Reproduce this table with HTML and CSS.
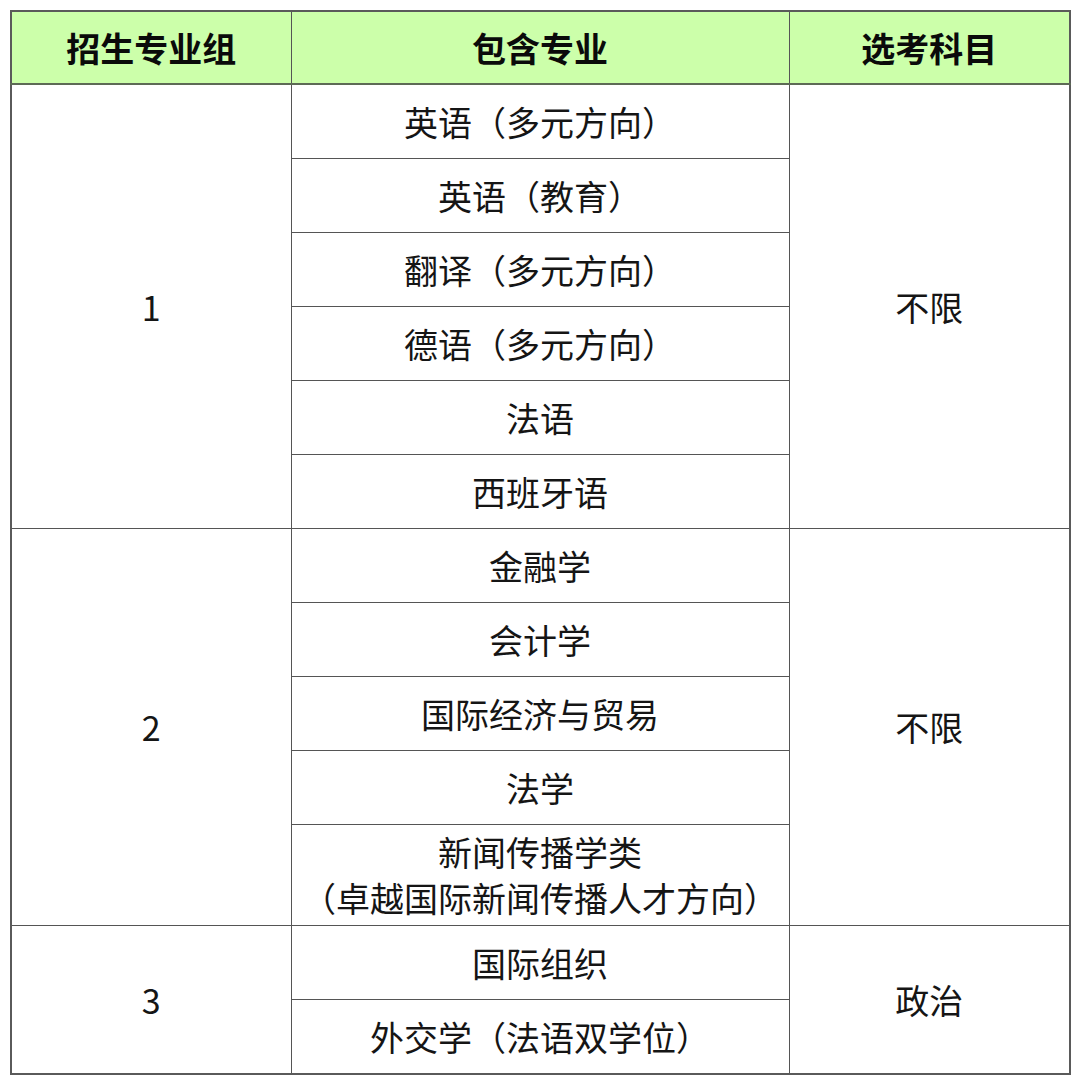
FILE: index.html
```html
<!DOCTYPE html>
<html lang="zh-CN">
<head>
<meta charset="utf-8">
<title>招生专业组</title>
<link rel="stylesheet" href="styles.css">
</head>
<body>
<table class="plan">
  <colgroup>
    <col class="c-group">
    <col class="c-major">
    <col class="c-subject">
  </colgroup>
  <thead>
    <tr class="head-row">
      <th>招生专业组</th>
      <th>包含专业</th>
      <th>选考科目</th>
    </tr>
  </thead>
  <tbody>
    <tr><td class="grp" rowspan="6">1</td><td>英语（多元方向）</td><td class="subj" rowspan="6">不限</td></tr>
    <tr><td>英语（教育）</td></tr>
    <tr><td>翻译（多元方向）</td></tr>
    <tr><td>德语（多元方向）</td></tr>
    <tr><td>法语</td></tr>
    <tr><td>西班牙语</td></tr>
    <tr><td class="grp" rowspan="5">2</td><td>金融学</td><td class="subj" rowspan="5">不限</td></tr>
    <tr><td>会计学</td></tr>
    <tr><td>国际经济与贸易</td></tr>
    <tr><td>法学</td></tr>
    <tr class="tall"><td class="two-line">新闻传播学类<br>（卓越国际新闻传播人才方向）</td></tr>
    <tr><td class="grp" rowspan="2">3</td><td>国际组织</td><td class="subj" rowspan="2">政治</td></tr>
    <tr><td>外交学（法语双学位）</td></tr>
  </tbody>
</table>
</body>
</html>
```

FILE: styles.css
```css
html, body {
  margin: 0;
  padding: 0;
  background: #ffffff;
}

body {
  padding: 10px;
  font-family: "Noto Sans CJK SC", "Noto Sans", sans-serif;
  color: #151515;
}

.plan {
  width: 1059px;
  border-collapse: collapse;
  table-layout: fixed;
  border: 2px solid #5a5a5a;
}

.c-group { width: 280px; }
.c-major { width: 498px; }
.c-subject { width: 281px; }

.plan th,
.plan td {
  border: 1px solid #555555;
  text-align: center;
  vertical-align: middle;
  padding: 0;
  font-size: 34px;
  line-height: 46px;
  height: 73px;
}

.plan th {
  background: #ccffaa;
  font-weight: 700;
  color: #0a0a0a;
  height: 71px;
  border-bottom: 2px solid #5d6a55;
}

.plan .tall td {
  height: 100px;
}

.plan .two-line {
  letter-spacing: 0;
}
```
